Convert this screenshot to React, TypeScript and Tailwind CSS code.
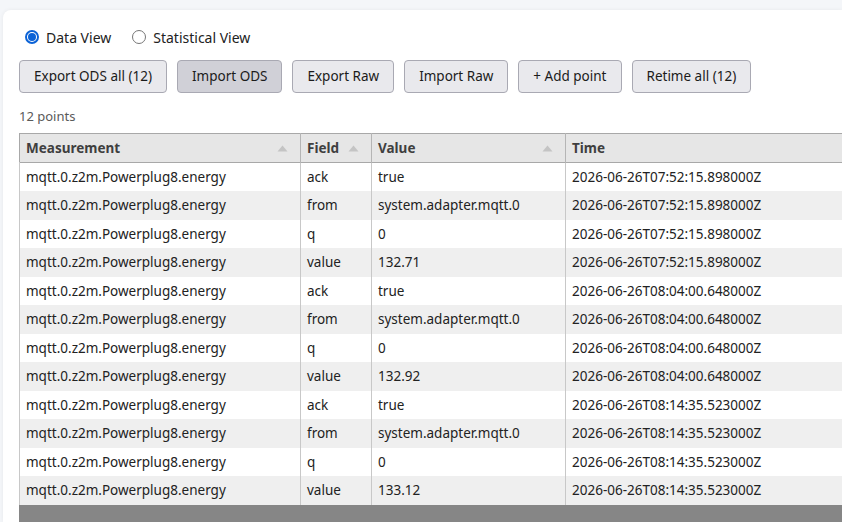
import React from "react";

type Row = { measurement: string; field: string; value: string; time: string };

const stamps = [
  "2026-06-26T07:52:15.898000Z",
  "2026-06-26T08:04:00.648000Z",
  "2026-06-26T08:14:35.523000Z",
];

const values = ["132.71", "132.92", "133.12"];

function buildRows(): Row[] {
  const rows: Row[] = [];
  stamps.forEach((time, i) => {
    const fields: [string, string][] = [
      ["ack", "true"],
      ["from", "system.adapter.mqtt.0"],
      ["q", "0"],
      ["value", values[i]],
    ];
    fields.forEach(([field, value]) => {
      rows.push({ measurement: "mqtt.0.z2m.Powerplug8.energy", field, value, time });
    });
  });
  return rows;
}

const buttonClass =
  "h-[33px] rounded-[4px] border border-[#a9a9b3] px-[14px] text-[13.5px] text-[#1b1b1b]";

const buttons = [
  { label: "Export ODS all (12)", active: false },
  { label: "Import ODS", active: true },
  { label: "Export Raw", active: false },
  { label: "Import Raw", active: false },
  { label: "+ Add point", active: false },
  { label: "Retime all (12)", active: false },
];

function SortArrow() {
  return (
    <svg width="11" height="7" viewBox="0 0 11 7" className="shrink-0" aria-hidden>
      <path d="M5.5 0.5 L10.5 6.5 L0.5 6.5 Z" fill="#c4c4c4" />
    </svg>
  );
}

function Radio({ checked, label }: { checked: boolean; label: string }) {
  return (
    <label className="flex items-center gap-[7px]">
      {checked ? (
        <span className="flex h-[14px] w-[14px] items-center justify-center rounded-full border-2 border-[#0b62d6] bg-white">
          <span className="h-[8px] w-[8px] rounded-full bg-[#0b62d6]" />
        </span>
      ) : (
        <span className="h-[14px] w-[14px] rounded-full border border-[#767676] bg-white" />
      )}
      <span>{label}</span>
    </label>
  );
}

function HeaderCell({ label, width, arrow }: { label: string; width: string; arrow: boolean }) {
  return (
    <th className={`${width} border-r border-[#b5b5b5] px-[6px] text-left font-bold text-[#3f3f3f]`}>
      <div className="flex items-center justify-between pr-[6px]">
        <span>{label}</span>
        {arrow && <SortArrow />}
      </div>
    </th>
  );
}

export default function App() {
  const rows = buildRows();

  return (
    <div
      className="h-[522px] w-[842px] overflow-hidden bg-[#f4f6f9] pt-[10px] pl-[3px] text-[13.5px] text-[#222]"
      style={{ fontFamily: '"Noto Sans", "Open Sans", sans-serif' }}
    >
      <div className="h-full overflow-hidden rounded-tl-[8px] bg-white pl-[16px] shadow-[0_0_4px_rgba(0,0,0,0.06)]">
        <div className="flex h-[50px] items-center gap-[21px] pl-[6px] pt-[4px] text-[14px]">
          <Radio checked label="Data View" />
          <Radio checked={false} label="Statistical View" />
        </div>

        <div className="flex gap-[10px]">
          {buttons.map((b) => (
            <button
              key={b.label}
              className={`${buttonClass} ${b.active ? "bg-[#d0d0d7]" : "bg-[#e9e9ed]"}`}
            >
              {b.label}
            </button>
          ))}
        </div>

        <p className="mt-[13px] h-[27px] text-[13px] leading-[20px] text-[#5a5a5a]">12 points</p>

        <table className="w-[900px] table-fixed border-collapse">
          <thead>
            <tr className="h-[29px] border border-[#a8a8a8] bg-[#e6e6e6]">
              <HeaderCell label="Measurement" width="w-[281px]" arrow />
              <HeaderCell label="Field" width="w-[71px]" arrow />
              <HeaderCell label="Value" width="w-[194px]" arrow />
              <HeaderCell label="Time" width="w-auto" arrow={false} />
            </tr>
          </thead>
          <tbody>
            {rows.map((r, i) => (
              <tr
                key={i}
                className={`h-[28.5px] ${i % 2 === 0 ? "bg-white" : "bg-[#efefef]"}`}
              >
                <td className="border-r border-l border-[#c8c8c8] px-[6px]">{r.measurement}</td>
                <td className="border-r border-[#c8c8c8] px-[6px]">{r.field}</td>
                <td className="border-r border-[#c8c8c8] px-[6px]">{r.value}</td>
                <td className="px-[6px]">{r.time}</td>
              </tr>
            ))}
          </tbody>
        </table>
        <div className="h-[40px] bg-[#868686]" />
      </div>
    </div>
  );
}
